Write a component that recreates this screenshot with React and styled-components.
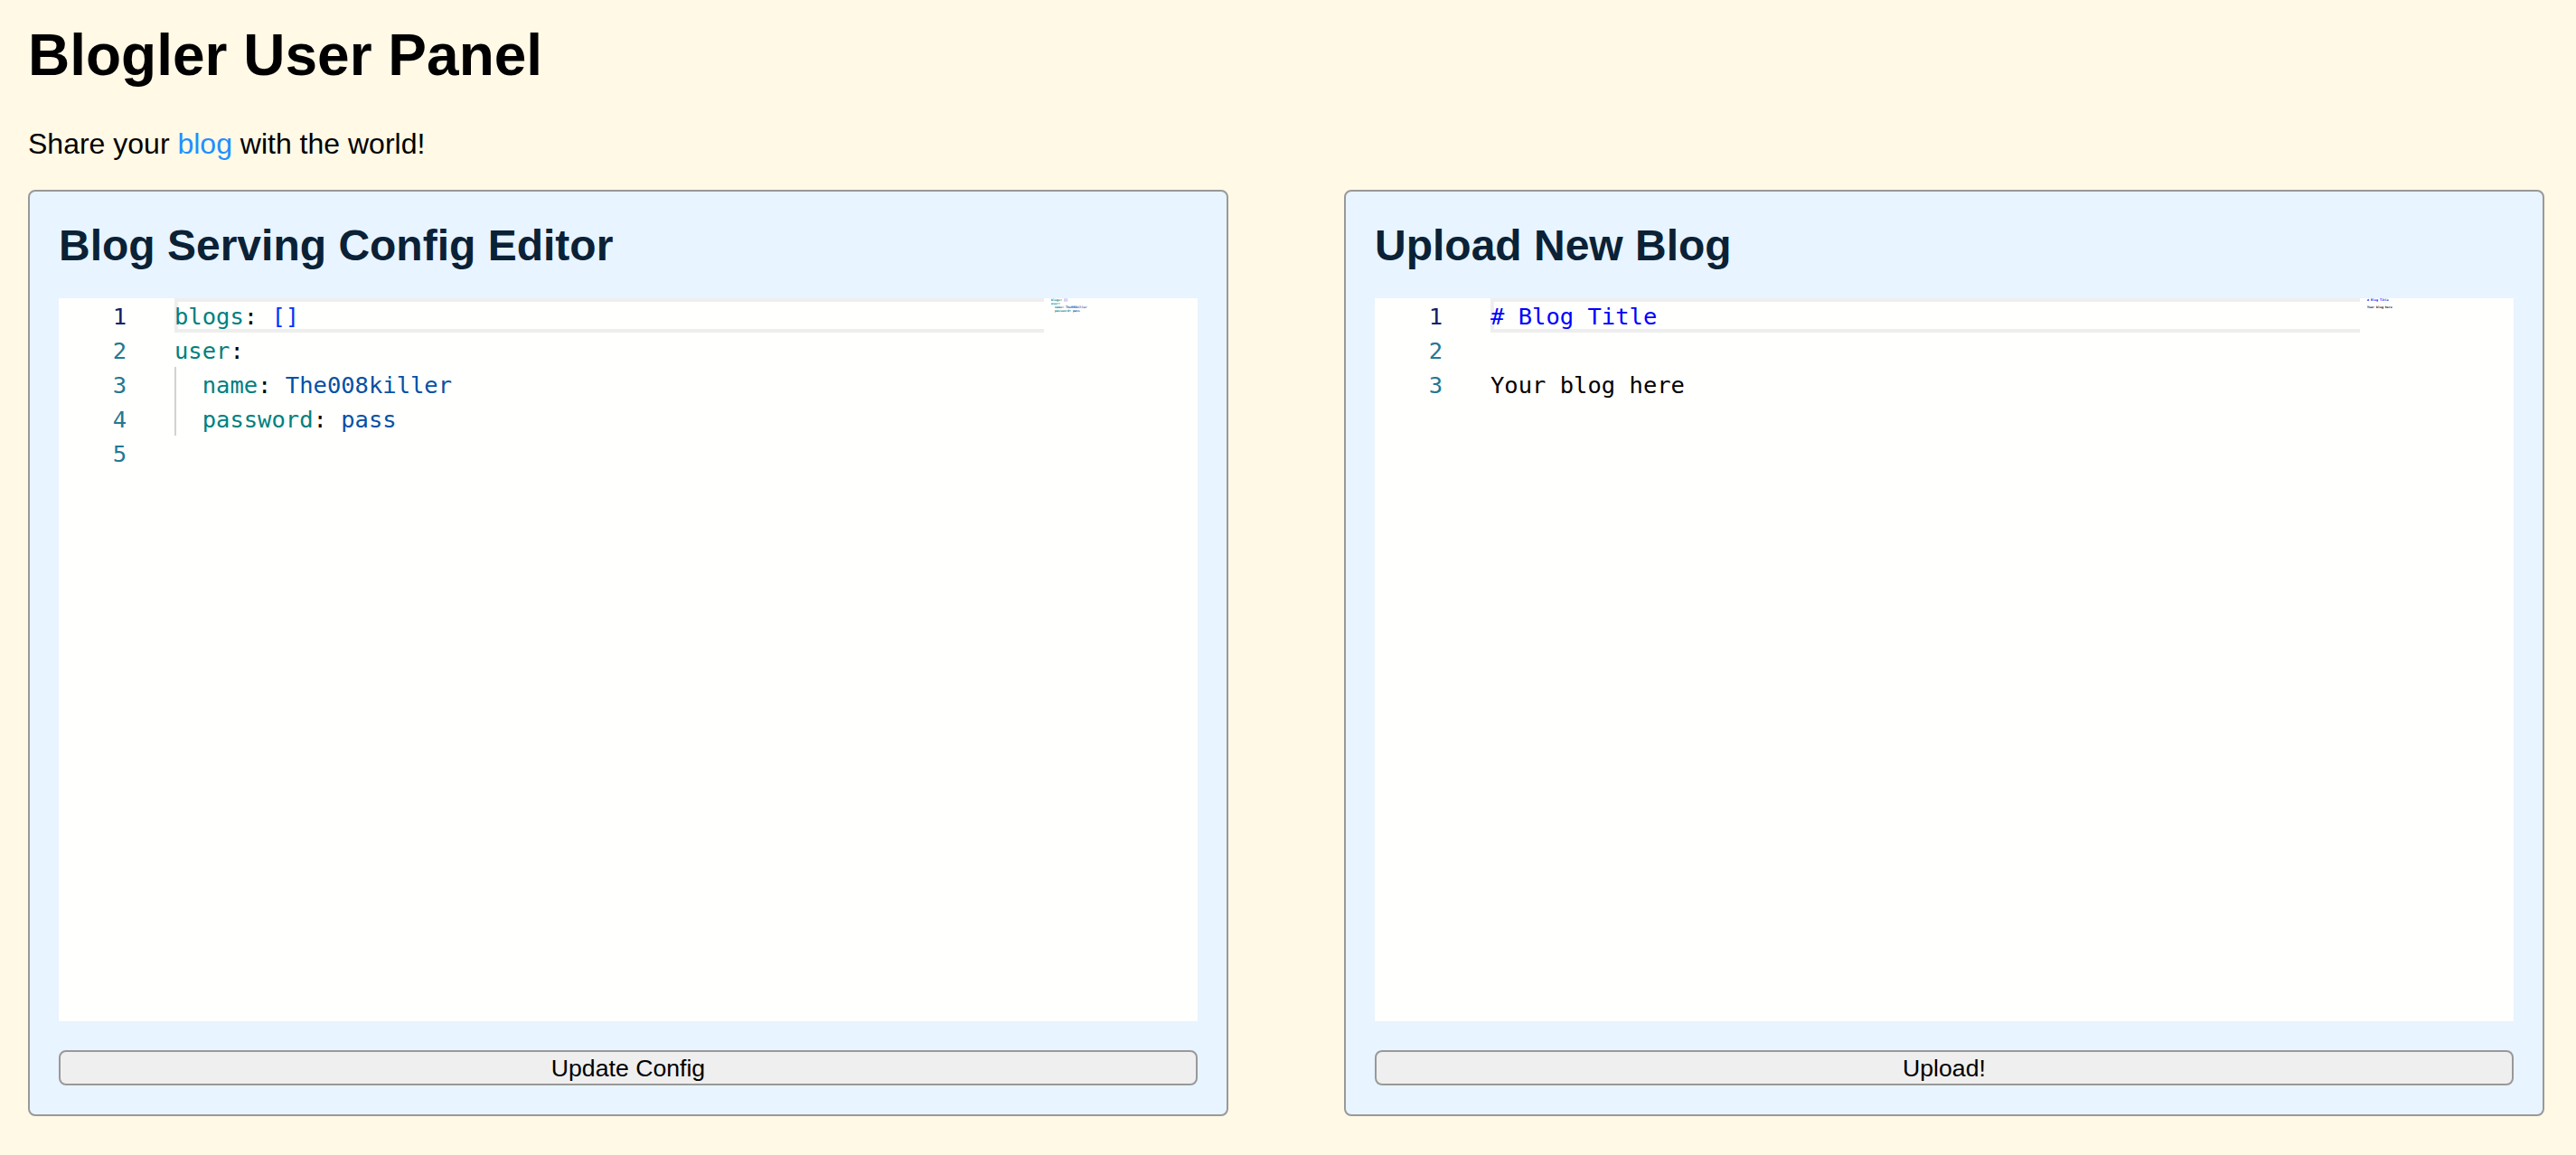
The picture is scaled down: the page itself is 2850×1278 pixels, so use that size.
import React from "react";
import styled, { createGlobalStyle } from "styled-components";

const configLines = [
  { parts: [["key", "blogs"], ["plain", ": "], ["bracket", "[]"]] },
  { parts: [["key", "user"], ["plain", ":"]] },
  { indent: true, parts: [["key", "name"], ["plain", ": "], ["value", "The008killer"]] },
  { indent: true, parts: [["key", "password"], ["plain", ": "], ["value", "pass"]] },
  { parts: [] },
];

const blogLines = [
  { parts: [["heading", "# Blog Title"]] },
  { parts: [] },
  { parts: [["plain", "Your blog here"]] },
];

const tokenColors = {
  key: "#008080",
  plain: "#000000",
  bracket: "#0431fa",
  value: "#0451a5",
  heading: "#0000ff",
};

export default function App() {
  return (
    <>
      <GlobalStyle />
      <Page>
        <Title>Blogler User Panel</Title>
        <Intro>
          Share your <BlogLink href="#">blog</BlogLink> with the world!
        </Intro>
        <Panels>
          <Panel>
            <PanelTitle>Blog Serving Config Editor</PanelTitle>
            <Editor lines={configLines} />
            <Button>Update Config</Button>
          </Panel>
          <Panel>
            <PanelTitle>Upload New Blog</PanelTitle>
            <Editor lines={blogLines} />
            <Button>Upload!</Button>
          </Panel>
        </Panels>
      </Page>
    </>
  );
}

function Editor({ lines }) {
  return (
    <EditorBox>
      <Gutter>
        {lines.map((line, i) => (
          <LineNumber key={i} $active={i === 0}>
            {i + 1}
          </LineNumber>
        ))}
      </Gutter>
      <Code>
        {lines.map((line, i) => (
          <CodeRow key={i} $active={i === 0}>
            {line.indent && <IndentGuide />}
            {line.parts.map(([type, text], j) => (
              <Token key={j} $type={type}>
                {text}
              </Token>
            ))}
          </CodeRow>
        ))}
      </Code>
      <Minimap>
        {lines.map((line, i) => (
          <MinimapRow key={i}>
            {line.indent && <MinimapIndent />}
            {line.parts.map(([type, text], j) => (
              <Token key={j} $type={type}>
                {text}
              </Token>
            ))}
          </MinimapRow>
        ))}
      </Minimap>
    </EditorBox>
  );
}

const GlobalStyle = createGlobalStyle`
  html, body {
    margin: 0;
    padding: 0;
    background: #fff9e6;
  }
  * {
    box-sizing: border-box;
  }
`;

const Page = styled.div`
  width: 2850px;
  height: 1278px;
  padding: 0 35px 0 31px;
  font-family: "Liberation Sans", Arial, sans-serif;
  overflow: hidden;
`;

const Title = styled.h1`
  margin: 0;
  padding-top: 24px;
  font-size: 64px;
  line-height: 74px;
  font-weight: 700;
  color: #000;
`;

const Intro = styled.p`
  margin: 43px 0 0;
  font-size: 32px;
  line-height: 37px;
  color: #000;
`;

const BlogLink = styled.a`
  color: #1e90ff;
  text-decoration: none;
`;

const Panels = styled.div`
  display: grid;
  grid-template-columns: 1328px 1328px;
  column-gap: 128px;
  margin-top: 32px;
`;

const Panel = styled.section`
  display: flex;
  flex-direction: column;
  height: 1025px;
  padding: 32px;
  background: #e8f4ff;
  border: 2px solid #999;
  border-radius: 8px;
`;

const PanelTitle = styled.h2`
  margin: 0;
  height: 87px;
  font-size: 48px;
  line-height: 56px;
  font-weight: 700;
  color: #0a2136;
`;

const EditorBox = styled.div`
  display: flex;
  flex: none;
  height: 800px;
  background: #fffffe;
  font-family: "DejaVu Sans Mono", monospace;
`;

const Gutter = styled.div`
  flex: none;
  width: 128px;
  padding-right: 53px;
`;

const LineNumber = styled.div`
  height: 38px;
  font-size: 25.5px;
  line-height: 40px;
  text-align: right;
  color: ${(props) => (props.$active ? "#0b216f" : "#237893")};
`;

const Code = styled.div`
  flex: none;
  width: 962px;
`;

const CodeRow = styled.div`
  display: flex;
  height: 38px;
  font-size: 25.5px;
  line-height: 40px;
  white-space: pre;
  box-shadow: ${(props) => (props.$active ? "inset 4px 4px 0 #eee, inset 0 -4px 0 #eee" : "none")};
`;

const IndentGuide = styled.span`
  flex: none;
  width: 30.7px;
  border-left: 2px solid #d3d3d3;
`;

const Token = styled.span`
  color: ${(props) => tokenColors[props.$type]};
`;

const Minimap = styled.div`
  flex: none;
  padding-left: 8px;
  font-size: 3.3px;
  font-weight: 700;
`;

const MinimapRow = styled.div`
  display: flex;
  height: 4px;
  line-height: 4px;
  white-space: pre;
`;

const MinimapIndent = styled.span`
  flex: none;
  width: 4px;
`;

const Button = styled.button`
  display: block;
  flex: none;
  width: 100%;
  height: 39px;
  margin-top: 32px;
  padding: 0;
  background: #efefef;
  border: 2px solid #999;
  border-radius: 8px;
  font-family: "Liberation Sans", Arial, sans-serif;
  font-size: 26.67px;
  line-height: 32px;
  color: #000;
`;
